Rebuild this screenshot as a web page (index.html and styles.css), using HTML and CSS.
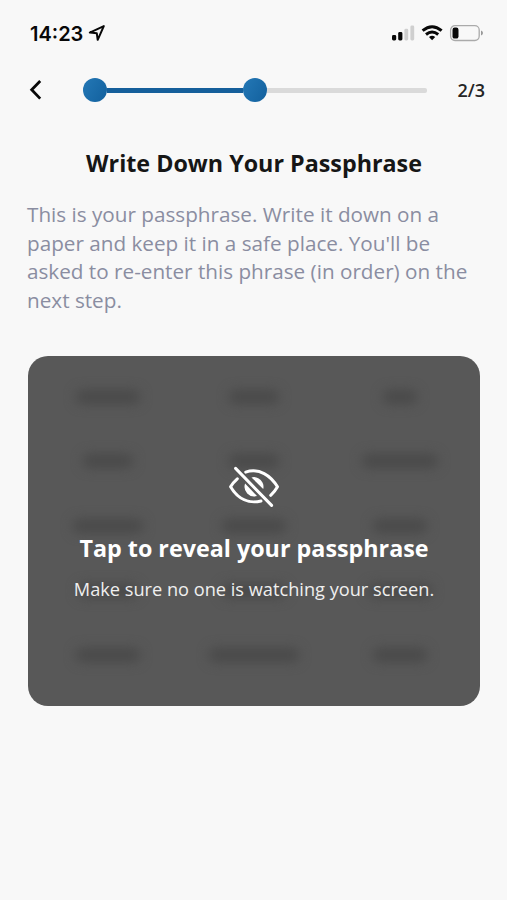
FILE: index.html
```html
<!DOCTYPE html>
<html lang="en">
<head>
<meta charset="utf-8">
<title>Write Down Your Passphrase</title>
<link rel="stylesheet" href="styles.css">
</head>
<body>
<header class="status">
  <span class="time">14:23</span>
  <svg class="location" width="18" height="18" viewBox="0 0 18 18"><path d="M1.8 8.6 15.8 2.1 9.7 15.8 8.8 9.3Z" fill="none" stroke="#080808" stroke-width="2" stroke-linejoin="round"/></svg>
  <svg class="indicators" width="94" height="20" viewBox="0 0 94 20">
    <g fill="#080808"><rect x="1" y="11" width="4.2" height="5.5" rx="1.4"/><rect x="7.2" y="8" width="4.2" height="8.5" rx="1.4"/></g>
    <g fill="#cfcfcf"><rect x="13.4" y="4.8" width="3.8" height="11.7" rx="1.4"/><rect x="19.4" y="1.6" width="3.8" height="14.9" rx="1.4"/></g>
    <g fill="none" stroke="#080808" stroke-width="3"><path d="M31.6 6.7Q41.1-1.2 50.6 6.7"/><path d="M35 10.5Q41.1 5.6 47.2 10.5"/></g>
    <path d="M38 12.9Q41.1 10.6 44.2 12.9L41.1 16.2Z" fill="#080808"/>
    <rect x="59.6" y="1.7" width="28.6" height="14.8" rx="4.4" fill="none" stroke="#aaa" stroke-width="1.3"/>
    <rect x="61.5" y="3.6" width="6" height="11" rx="2.2" fill="#080808"/>
    <path d="M90 6.6Q92 7.2 92 9.1T90 11.6Z" fill="#999"/>
  </svg>
</header>
<nav class="steps">
  <svg class="back" width="16" height="22" viewBox="0 0 16 22"><path d="M12.2 2 3.7 10.8 12.2 19.6" fill="none" stroke="#080808" stroke-width="2.8"/></svg>
  <div class="track"><i class="dot"></i><i class="line done"></i><i class="dot"></i><i class="line"></i></div>
  <span class="count">2/3</span>
</nav>
<main>
  <h1>Write Down Your Passphrase</h1>
  <p class="intro">This is your passphrase. Write it down on a<br>paper and keep it in a safe place. You'll be<br>asked to re-enter this phrase (in order) on the<br>next step.</p>
  <section class="card">
    <div class="words" aria-hidden="true">
      <i class="w64"></i><i class="w50"></i><i class="w34"></i>
      <i class="w50"></i><i class="w50"></i><i class="w76"></i>
      <i class="w70"></i><i class="w64"></i><i class="w54"></i>
      <i class="w60"></i><i class="w64"></i><i class="w64"></i>
      <i class="w64"></i><i class="w90"></i><i class="w54"></i>
    </div>
    <div class="reveal">
      <svg class="eye" width="54" height="44" viewBox="0 0 54 44" fill="none" stroke="#fff" stroke-width="3" stroke-linecap="round">
        <path d="M18.7 7.1C32.4 2.7 43.6 10.6 50.5 21.8Q47.9 26.5 43.7 30.3" stroke-linejoin="round"/>
        <path d="M10.3 13.8Q6.1 17.4 3.6 21.8C11 34.5 22.2 38.8 34 36" stroke-linejoin="round"/>
        <path d="M24.5 12.4A9.6 9.6 0 0 1 36.2 24Z" fill="#fff" stroke="none"/>
        <path d="M18.1 18.5A9.7 9.7 0 0 0 30 31Z" fill="#fff" stroke="none"/>
        <path d="M8.6 3.4 44.6 40.4"/>
      </svg>
      <h2>Tap to reveal your passphrase</h2>
      <p class="warning">Make sure no one is watching your screen.</p>
    </div>
  </section>
</main>
</body>
</html>
```
FILE: styles.css
```css
* { box-sizing: border-box; }
body { margin: 0; height: 900px; overflow: hidden; background: #f8f8f8; font-family: "Open Sans", sans-serif; }
svg { display: block; flex: none; }
h1, h2, p { margin: 0; white-space: nowrap; }
.status { display: flex; height: 65px; padding: 24px 22px 0 30px; }
.time { width: 54px; font: 600 20px/20px Inter, sans-serif; color: #080808; }
.location { margin-left: 4px; }
.indicators { margin-left: auto; }
.steps { display: flex; align-items: center; height: 50px; padding: 0 22px 0 28px; }
.back { margin-right: 39px; }
.track { display: flex; align-items: center; width: 344px; }
.dot { flex: none; width: 24px; height: 24px; border-radius: 50%; background: linear-gradient(120deg, #2478b6, #12609d); }
.line { flex: 1; height: 5px; border-radius: 0 2px 2px 0; background: #dadada; }
.line.done { flex: 0 0 136px; background: #155f9b; border-radius: 0; }
.count { margin-left: auto; font-size: 18px; font-weight: 600; color: #252525; }
main { padding: 32px 27px 0 28px; }
h1 { text-align: center; font-size: 23.3px; line-height: 32px; font-weight: 700; color: #161616; }
.intro { margin: 21px 0 0 -1px; font-size: 20.7px; line-height: 28.6px; color: #8a8da1; }
.card { display: grid; height: 350px; margin-top: 42px; border-radius: 20px; overflow: hidden; background: #585858; }
.words, .reveal { grid-area: 1 / 1; }
.words { display: grid; grid-template-columns: repeat(3, 146px); grid-auto-rows: 64.7px; place-items: center; padding: 8px 7px; filter: blur(6px); }
.words i { height: 14px; border-radius: 6px; background: #494949; }
.w34 { width: 34px; } .w50 { width: 50px; } .w54 { width: 54px; } .w60 { width: 60px; }
.w64 { width: 64px; } .w70 { width: 70px; } .w76 { width: 76px; } .w90 { width: 90px; }
.reveal { display: flex; flex-direction: column; align-items: center; z-index: 1; padding-top: 109px; color: #fff; }
h2 { margin-top: 23px; font-size: 23.3px; line-height: 32px; font-weight: 700; }
.warning { margin-top: 13px; font-size: 18.2px; line-height: 24px; color: #efefef; }
```
